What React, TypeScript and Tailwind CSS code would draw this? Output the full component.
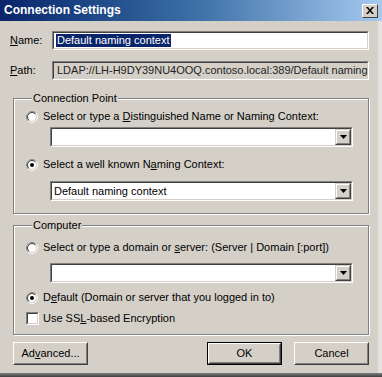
import type { ReactNode } from "react";

const font = "font-['Liberation_Sans',Arial,sans-serif]";

const Sunken = ({ children, className = "" }: { children?: ReactNode; className?: string }) => (
  <div className={`border border-t-[#808080] border-l-[#808080] border-r-white border-b-white ${className}`}>
    <div className="flex h-full items-center border border-t-[#404040] border-l-[#404040] border-r-[#d4d0c8] border-b-[#d4d0c8]">
      {children}
    </div>
  </div>
);

const Arrow = () => (
  <div className="flex h-full w-[16px] items-center justify-center border border-t-[#d4d0c8] border-l-[#d4d0c8] border-r-[#404040] border-b-[#404040] bg-[#d4d0c8]">
    <div className="flex h-full w-full items-center justify-center border border-t-white border-l-white border-r-[#808080] border-b-[#808080]">
      <svg width="7" height="4" viewBox="0 0 7 4">
        <path d="M0 0h7L3.5 4z" fill="#000" />
      </svg>
    </div>
  </div>
);

const Combo = ({ value }: { value?: string }) => (
  <Sunken className="ml-[24px] mr-[15px] h-[20px] bg-white">
    <span className="flex-1 pl-[2px] text-black">{value}</span>
    <Arrow />
  </Sunken>
);

const Radio = ({ checked }: { checked?: boolean }) => (
  <svg width="12" height="12" viewBox="0 0 12 12" className="shrink-0">
    <circle cx="6" cy="6" r="4.5" fill="#fff" />
    <circle cx="6" cy="6" r="5.5" fill="none" stroke="#fff" />
    <path d="M2.1 9.9A5.5 5.5 0 0 1 9.9 2.1" fill="none" stroke="#808080" />
    <circle cx="6" cy="6" r="4.5" fill="none" stroke="#d4d0c8" />
    <path d="M2.8 9.2A4.5 4.5 0 0 1 9.2 2.8" fill="none" stroke="#404040" />
    {checked && <circle cx="6" cy="6" r="2" fill="#000" />}
  </svg>
);

const Option = ({ checked, children, className = "" }: { checked?: boolean; children: ReactNode; className?: string }) => (
  <div className={`flex h-[13px] items-center gap-[5px] ${className}`}>
    <Radio checked={checked} />
    <span>{children}</span>
  </div>
);

const Button = ({ children, def, className = "" }: { children: ReactNode; def?: boolean; className?: string }) => (
  <div className={`h-[23px] w-[75px] ${def ? "border border-black" : ""} ${className}`}>
    <div className="h-full border border-t-white border-l-white border-r-[#404040] border-b-[#404040]">
      <div className="flex h-full items-center justify-center border border-t-[#d4d0c8] border-l-[#d4d0c8] border-r-[#808080] border-b-[#808080]">
        {children}
      </div>
    </div>
  </div>
);

export default function App() {
  return (
    <div className={`${font} flex h-[377px] w-[382px] flex-col overflow-hidden bg-[#d4d0c8] text-[11px] leading-[13px] text-black`}>
      <div className="flex h-[21px] shrink-0 items-center justify-between bg-gradient-to-r from-[#0a246a] via-[#3a6ea5] to-[#a6caf0] pl-[4px] pr-[4px]">
        <span className="text-[12px] font-bold text-white">Connection Settings</span>
        <div className="flex h-[14px] w-[16px] items-center justify-center border border-t-white border-l-white border-r-[#404040] border-b-[#404040] bg-[#d4d0c8]">
          <svg width="8" height="7" viewBox="0 0 8 7">
            <path d="M0 0h2l2 2.5L6 0h2L5 3.5 8 7H6L4 4.5 2 7H0l3-3.5z" fill="#000" />
          </svg>
        </div>
      </div>

      <div className="flex flex-1 flex-col border-r-[4px] border-r-[#e4e2de] pl-[10px] pr-[9px]">
        <div className="mt-[10px] flex h-[19px] items-center">
          <span className="w-[42px]">
            <u>N</u>ame:
          </span>
          <Sunken className="h-[19px] flex-1 bg-white">
            <span className="ml-[2px] bg-[#0a246a] px-[1px] text-white">Default naming context</span>
          </Sunken>
        </div>
        <div className="mt-[11px] flex h-[19px] items-center">
          <span className="w-[42px]">
            <u>P</u>ath:
          </span>
          <Sunken className="h-[19px] flex-1 overflow-hidden bg-[#d4d0c8]">
            <span className="whitespace-nowrap pl-[3px] text-[#222]">LDAP://LH-H9DY39NU4OOQ.contoso.local:389/Default naming context</span>
          </Sunken>
        </div>

        <fieldset className="ml-[3px] mt-[12px] border border-[#808080] pb-[12px] pl-[12px] pt-[5px] shadow-[1px_1px_0_#fff,inset_1px_1px_0_#fff]">
          <legend className="ml-[6px] bg-[#d4d0c8] px-[1px]">Connection Point</legend>
          <Option>
            Select or type a <u>D</u>istinguished Name or Naming Context:
          </Option>
          <div className="mt-[4px]">
            <Combo />
          </div>
          <Option checked className="mt-[11px]">
            Select a well known N<u>a</u>ming Context:
          </Option>
          <div className="mt-[10px]">
            <Combo value="Default naming context" />
          </div>
        </fieldset>

        <fieldset className="ml-[3px] mt-[5px] border border-[#808080] pb-[9px] pl-[12px] pt-[9px] shadow-[1px_1px_0_#fff,inset_1px_1px_0_#fff]">
          <legend className="ml-[6px] bg-[#d4d0c8] px-[1px]">Computer</legend>
          <Option>
            Select or type a domain or <u>s</u>erver: (Server | Domain [:port])
          </Option>
          <div className="mt-[9px]">
            <Combo />
          </div>
          <Option checked className="mt-[8px]">
            D<u>e</u>fault (Domain or server that you logged in to)
          </Option>
          <div className="mt-[8px] flex h-[13px] items-center gap-[4px]">
            <Sunken className="h-[13px] w-[13px] bg-white" />
            <span>
              Use SS<u>L</u>-based Encryption
            </span>
          </div>
        </fieldset>

        <div className="ml-[3px] mt-[7px] flex items-center">
          <Button>
            Ad<u>v</u>anced...
          </Button>
          <Button def className="ml-auto">
            OK
          </Button>
          <Button className="ml-[12px]">Cancel</Button>
        </div>
      </div>
      <div className="h-[4px] shrink-0 bg-gradient-to-b from-[#808080] to-[#404040]" />
    </div>
  );
}
